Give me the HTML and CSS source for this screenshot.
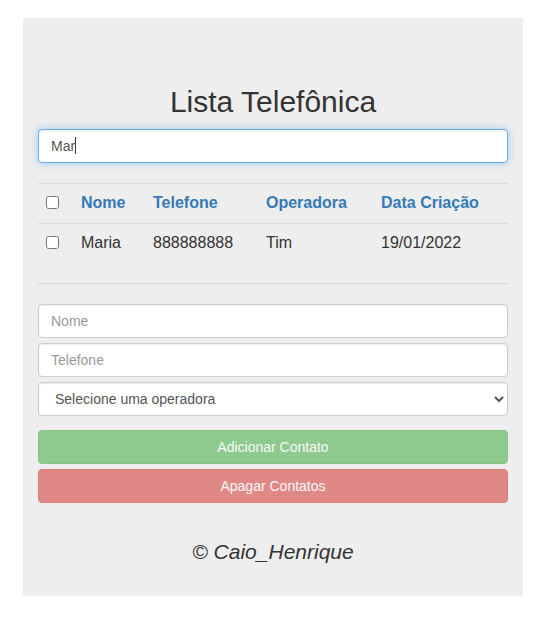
FILE: index.html
```html
<!DOCTYPE html>
<html lang="pt-BR">
<head>
<meta charset="utf-8">
<title>Lista Telefônica</title>
<link rel="stylesheet" href="styles.css">
</head>
<body>
<div class="jumbotron">
  <h1 class="title">Lista Telefônica</h1>
  <div class="search-wrap">
    <input class="form-control search" type="text" value="Mar">
    <span class="caret"></span>
  </div>
  <table class="table">
    <colgroup>
      <col class="c-check">
      <col class="c-nome">
      <col class="c-tel">
      <col class="c-op">
      <col class="c-data">
    </colgroup>
    <thead>
      <tr>
        <th><input type="checkbox" class="check"></th>
        <th>Nome</th>
        <th>Telefone</th>
        <th>Operadora</th>
        <th>Data Criação</th>
      </tr>
    </thead>
    <tbody>
      <tr>
        <td><input type="checkbox" class="check"></td>
        <td>Maria</td>
        <td>888888888</td>
        <td>Tim</td>
        <td>19/01/2022</td>
      </tr>
    </tbody>
  </table>
  <hr class="divider">
  <form class="contact-form">
    <input class="form-control" type="text" placeholder="Nome">
    <input class="form-control" type="text" placeholder="Telefone">
    <select class="form-control select">
      <option>Selecione uma operadora</option>
    </select>
    <div class="buttons">
      <button type="button" class="btn btn-success" disabled>Adicionar Contato</button>
      <button type="button" class="btn btn-danger" disabled>Apagar Contatos</button>
    </div>
  </form>
  <p class="footer">© Caio_Henrique</p>
</div>
</body>
</html>
```
FILE: styles.css
```css
* {
  box-sizing: border-box;
}

html, body {
  margin: 0;
  padding: 0;
  background: #fff;
}

body {
  font-family: "Liberation Sans", Arial, Helvetica, sans-serif;
  font-size: 14px;
  line-height: 1.42857;
  color: #333;
}

.jumbotron {
  width: 500px;
  margin: 18px 0 0 23px;
  padding: 67px 15px 29px;
  background: #eee;
}

.title {
  margin: 0 0 11px;
  font-size: 30px;
  font-weight: 400;
  line-height: 33px;
  text-align: center;
  color: #333;
}

.form-control {
  display: block;
  width: 100%;
  height: 34px;
  padding: 6px 12px;
  font-family: inherit;
  font-size: 14px;
  line-height: 20px;
  color: #555;
  background: #fff;
  border: 1px solid #ccc;
  border-radius: 4px;
  box-shadow: inset 0 1px 1px rgba(0, 0, 0, .075);
  outline: none;
}

.form-control::placeholder {
  color: #999;
}

.search-wrap {
  position: relative;
}

.search {
  border-color: #66afe9;
  box-shadow: inset 0 1px 1px rgba(0, 0, 0, .075), 0 0 8px rgba(102, 175, 233, .6);
}

.caret {
  position: absolute;
  left: 37px;
  top: 8px;
  width: 1px;
  height: 17px;
  background: #333;
}

.table {
  width: 100%;
  margin: 20px 0 20px;
  border-collapse: collapse;
  table-layout: fixed;
  font-size: 16px;
}

.c-check { width: 35px; }
.c-nome { width: 72px; }
.c-tel { width: 113px; }
.c-op { width: 115px; }
.c-data { width: 135px; }

.table th,
.table td {
  padding: 7px 8px 9px;
  line-height: 23px;
  text-align: left;
  vertical-align: top;
  border-top: 1px solid #ddd;
  white-space: nowrap;
}

.table th {
  color: #337ab7;
  font-weight: 700;
}

.table td {
  color: #333;
}

.check {
  display: block;
  width: 13px;
  height: 13px;
  margin: 5px 0 0;
}

.divider {
  margin: 0 0 20px;
  border: 0;
  border-top: 1px solid #d5d5d5;
  height: 0;
}

.contact-form {
  display: flex;
  flex-direction: column;
  gap: 5px;
  margin: 0;
}

.select {
  padding: 6px 12px;
  color: #555;
}

.buttons {
  display: flex;
  flex-direction: column;
  gap: 5px;
  margin-top: 9px;
}

.btn {
  display: block;
  width: 100%;
  height: 34px;
  padding: 6px 12px;
  font-family: inherit;
  font-size: 14px;
  line-height: 20px;
  color: #fff;
  text-align: center;
  border: 1px solid transparent;
  border-radius: 4px;
  opacity: .65;
  cursor: not-allowed;
}

.btn-success {
  background: #5cb85c;
  border-color: #4cae4c;
}

.btn-danger {
  background: #d9534f;
  border-color: #d43f3a;
}

.footer {
  margin: 34px 0 0;
  font-size: 21px;
  line-height: 30px;
  font-style: italic;
  text-align: center;
  color: #333;
}
```
